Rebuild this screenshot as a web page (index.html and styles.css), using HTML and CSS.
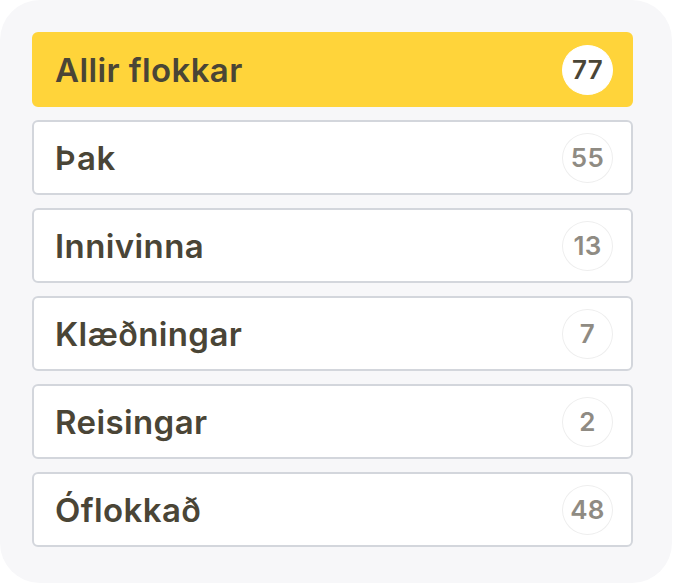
FILE: index.html
```html
<!DOCTYPE html>
<html lang="is">
<head>
<meta charset="utf-8">
<link rel="stylesheet" href="styles.css">
</head>
<body>
<div class="card">
  <ul class="list">
    <li class="item active"><span class="label">Allir flokkar</span><span class="count">77</span></li>
    <li class="item"><span class="label">Þak</span><span class="count">55</span></li>
    <li class="item"><span class="label">Innivinna</span><span class="count">13</span></li>
    <li class="item"><span class="label">Klæðningar</span><span class="count">7</span></li>
    <li class="item"><span class="label">Reisingar</span><span class="count">2</span></li>
    <li class="item"><span class="label">Óflokkað</span><span class="count">48</span></li>
  </ul>
</div>
</body>
</html>
```
FILE: styles.css
```css
html, body {
  margin: 0;
  padding: 0;
  background: #ffffff;
  font-family: Inter, "Noto Sans", sans-serif;
}
.card {
  box-sizing: border-box;
  width: 672px;
  height: 583px;
  background: #f7f7f9;
  border-radius: 40px;
  padding: 32px 39px 37px 32px;
}
.list {
  list-style: none;
  margin: 0;
  padding: 0;
  display: flex;
  flex-direction: column;
  gap: 13px;
}
.item {
  box-sizing: border-box;
  height: 75px;
  display: flex;
  align-items: center;
  justify-content: space-between;
  padding: 0 18px 0 21px;
  background: #ffffff;
  border: 2px solid #d3d6dc;
  border-radius: 6px;
}
.item.active {
  background: #ffd43a;
  border-color: #ffd43a;
}
.label {
  font-size: 33px;
  font-weight: 600;
  letter-spacing: 0.4px;
  color: #4a4536;
}
.count {
  box-sizing: border-box;
  width: 51px;
  height: 50px;
  border-radius: 50%;
  background: #ffffff;
  border: 1.5px solid #eeeeee;
  display: flex;
  align-items: center;
  justify-content: center;
  font-size: 26px;
  font-weight: 600;
  letter-spacing: 0.3px;
  color: #8f8b83;
}
.item.active .count {
  border-color: #ffffff;
  color: #4a4536;
}
```
